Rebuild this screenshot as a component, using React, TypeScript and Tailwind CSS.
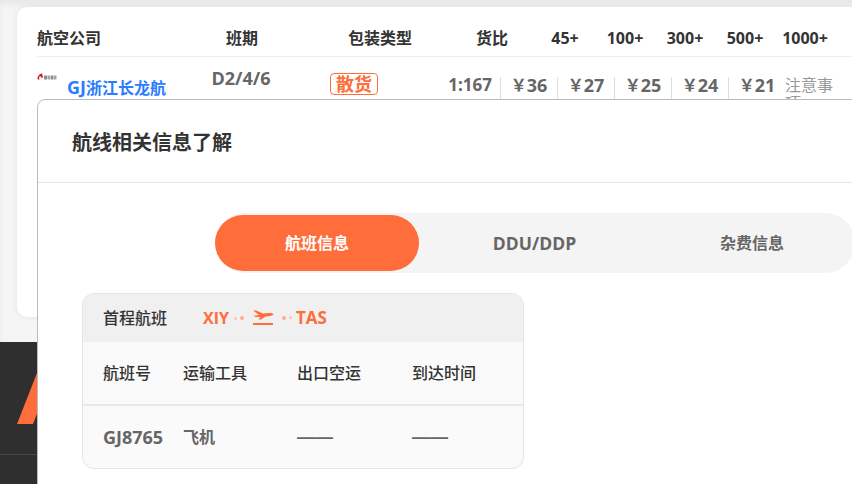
const fontStack = "font-['Open_Sans','Noto_Sans_CJK_SC',sans-serif]";

const headers = [
  { label: '航空公司', className: 'w-[136px] text-left' },
  { label: '班期', className: 'w-[138px] text-center' },
  { label: '包装类型', className: 'w-[138px] text-center' },
  { label: '货比', className: 'w-[86px] text-center' },
  { label: '45+', className: 'w-[60px] text-center' },
  { label: '100+', className: 'w-[60px] text-center' },
  { label: '300+', className: 'w-[60px] text-center' },
  { label: '500+', className: 'w-[60px] text-center' },
  { label: '1000+', className: 'w-[60px] text-center' },
];

const prices = ['36', '27', '25', '24', '21'];

function PlaneIcon() {
  return (
    <svg width="22" height="16" viewBox="0 0 22 16" fill="#ff6d3a">
      <path d="M1 0.5 L4 0.5 L11 3.5 L16 3 C19 2.6 21.5 3.4 21.5 4.2 C21.5 5 19 5.8 16 6.2 L13 6.7 L9 9.5 L6.5 9.5 L8.5 6.9 L4 7 L1 5.8 L7 5 Z" />
      <rect x="1" y="13" width="20" height="2" />
    </svg>
  );
}

function Dots() {
  return (
    <span className="flex items-center gap-[3px]">
      <span className="h-[3px] w-[3px] rounded-full bg-[#ffc4ae]" />
      <span className="h-[4px] w-[4px] rounded-full bg-[#ffab8d]" />
    </span>
  );
}

function AirlineLogo() {
  return (
    <svg width="20" height="8" viewBox="0 0 20 8">
      <path d="M0.5 6 C0.5 3 2.5 0.5 5.5 0.5 L5 2 C6.5 2.5 6 5 4.5 5.5 C4.5 4 3.5 3 2.5 3.5 C2 4.5 2 5.5 2.5 7 Z" fill="#d9141e" />
      <rect x="7" y="2.5" width="3" height="4" fill="#8a8a8a" />
      <rect x="10.5" y="2.5" width="3" height="4" fill="#a5a5a5" />
      <rect x="14" y="2.5" width="2.5" height="4" fill="#8a8a8a" />
      <rect x="17" y="2.5" width="2.5" height="4" fill="#a5a5a5" />
    </svg>
  );
}

function RateTable() {
  return (
    <div className="ml-[17px] h-[310px] rounded-l-[10px] bg-white pl-5 shadow-[0_0_6px_rgba(0,0,0,0.08)]">
      <div className="flex h-[50px] items-center border-b border-[#eeeeee] pt-[12px] text-base font-bold text-[#333333]">
        {headers.map(h => (
          <div key={h.label} className={h.className}>
            {h.label}
          </div>
        ))}
      </div>
      <div className="flex h-[44px] text-base font-bold text-[#666666]">
        <div className="relative w-[136px] pl-[30px] pt-[16px] leading-[24px] whitespace-nowrap text-[#2b7cff]">
          <span className="absolute left-0 top-[16px] flex">
            <AirlineLogo />
          </span>
          <span className="text-lg">GJ</span>浙江长龙航
        </div>
        <div className="w-[136px] pt-[9px] text-center text-lg leading-[24px]">D2/4/6</div>
        <div className="w-[136px] pt-[16px] pl-[21px]">
          <span className="flex h-[22px] w-[48px] items-center justify-center rounded-[4px] border border-[#ff6d3a] text-lg text-[#ff6d3a]">
            散货
          </span>
        </div>
        <div className="w-[47px] pt-[16px] text-right text-[17px] leading-[24px] whitespace-nowrap">1:167</div>
        <div className="flex pl-[8px]">
          {prices.map(p => (
            <div key={p} className="mt-[20px] flex h-[24px] w-[57px] items-start justify-center border-l border-[#dddddd] leading-[16px] whitespace-nowrap">
              ￥<span className="text-lg leading-[16px]">{p}</span>
            </div>
          ))}
        </div>
        <div className="w-[50px] pt-[19px] text-base font-normal leading-[18px] text-[#999999]">注意事项</div>
      </div>
    </div>
  );
}

function FlightInfoCard() {
  return (
    <div className="ml-[44px] mt-[20px] w-[442px] overflow-hidden rounded-xl border border-[#e5e5e5] bg-[#fafafa]">
      <div className="flex h-[48px] items-center bg-[#f0f0f0] pl-5 text-base font-medium text-[#333333]">
        <span className="w-[100px]">首程航班</span>
        <span className="flex items-center font-bold text-[#ff6d3a]">
          XIY
          <span className="ml-[5px]"><Dots /></span>
          <span className="mx-[8px]"><PlaneIcon /></span>
          <span className="rotate-180"><Dots /></span>
          <span className="ml-[4px] text-[17px]">TAS</span>
        </span>
      </div>
      <div className="flex h-[64px] items-center border-b-2 border-[#e8e8e8] pl-5 text-base font-medium text-[#333333]">
        <div className="w-[80px]">航班号</div>
        <div className="w-[114px]">运输工具</div>
        <div className="w-[115px]">出口空运</div>
        <div>到达时间</div>
      </div>
      <div className="flex h-[62px] items-center pl-5 text-base font-semibold text-[#666666]">
        <div className="w-[80px] text-lg font-bold">GJ8765</div>
        <div className="w-[114px]">飞机</div>
        <div className="w-[115px] font-['Liberation_Sans',sans-serif] text-lg">——</div>
        <div className="font-['Liberation_Sans',sans-serif] text-lg">——</div>
      </div>
    </div>
  );
}

function RouteDialog() {
  return (
    <div className="absolute left-[37px] top-[99px] h-[400px] w-[830px] rounded-tl-lg border border-[#bbbbbb] bg-white">
      <div className="flex h-[83px] items-center border-b border-[#e5e5e5] pl-[34px] pt-[3px] text-xl font-bold text-[#333333]">
        航线相关信息了解
      </div>
      <div className="ml-[177px] mt-[30px] flex h-[60px] w-[640px] items-center rounded-[30px] bg-[#f4f4f4] text-base font-bold text-[#666666]">
        <div className="flex h-[56px] w-[204px] items-center justify-center rounded-[28px] bg-[#ff6d3a] text-white">航班信息</div>
        <div className="w-[231px] text-center text-[17.5px]">DDU/DDP</div>
        <div className="w-[204px] text-center">杂费信息</div>
      </div>
      <FlightInfoCard />
    </div>
  );
}

export default function App() {
  return (
    <div className={`relative h-[484px] w-[852px] overflow-hidden bg-[#f5f5f5] shadow-[inset_0_5px_5px_rgba(0,0,0,0.05)] ${fontStack}`}>
      <div className="pt-[7px]">
        <RateTable />
      </div>
      <div className="mt-[25px] h-[142px] bg-[#2f2f2f]">
        <div className="h-[113px] overflow-hidden border-b border-[#484848] pl-[17px] pt-[31px]">
          <div className="h-[51px] w-[20px] bg-[#ff6d3a] [clip-path:polygon(0_100%,100%_0,100%_80%,80%_100%)]" />
        </div>
      </div>
      <RouteDialog />
    </div>
  );
}
